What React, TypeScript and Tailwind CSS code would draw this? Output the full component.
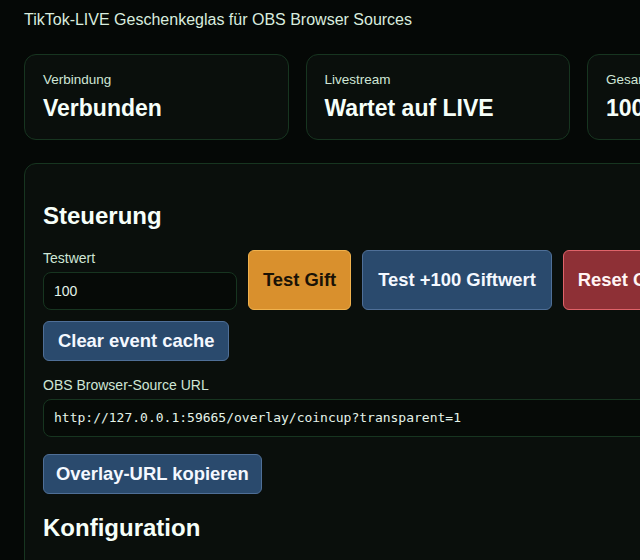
import React from "react";

const stats = [
  { label: "Verbindung", value: "Verbunden" },
  { label: "Livestream", value: "Wartet auf LIVE" },
  { label: "Gesamtwert", value: "100" },
  { label: "Letztes Geschenk", value: "–" },
];

const overlayUrl = "http://127.0.0.1:59665/overlay/coincup?transparent=1";

function StatCard({ label, value }: { label: string; value: string }) {
  return (
    <div className="h-[86px] rounded-[12px] border border-[#173520] bg-[#0a0f0c] px-[18px] pt-[17px]">
      <div className="text-[13.5px] leading-[16px] text-[#cfe6d6]">{label}</div>
      <div className="mt-[7px] text-[23px] font-bold leading-[26px] text-[#f6fff9]">{value}</div>
    </div>
  );
}

export default function App() {
  return (
    <div
      className="h-screen w-screen overflow-hidden bg-[#050806] text-[#d9ecdf]"
      style={{ fontFamily: '"Liberation Sans", Arial, sans-serif' }}
    >
      <div className="w-[1160px] px-6">
        {/* Header */}
        <p className="pt-[11px] text-[16px] leading-[18px] text-[#d9ecdf]">
          TikTok-LIVE Geschenkeglas für OBS Browser Sources
        </p>

        {/* Status cards */}
        <div className="mt-[25px] grid grid-cols-[repeat(4,264.5px)] gap-[17px]">
          {stats.map((s) => (
            <StatCard key={s.label} label={s.label} value={s.value} />
          ))}
        </div>

        {/* Control panel */}
        <div className="mt-[23px] rounded-[12px] border border-[#173520] bg-[#0a0f0c] px-[18px] pb-8">
          <h2 className="pt-[38px] text-[24px] font-bold leading-[28px] text-[#f6fff9]">Steuerung</h2>

          <div className="mt-[20px] flex flex-col gap-[11px]">
            <div className="flex items-stretch gap-[11px]">
              <div className="flex w-[194px] flex-col">
                <label className="text-[14px] leading-[16px] text-[#cfe6d6]">Testwert</label>
                <input
                  defaultValue="100"
                  className="mt-[6px] h-[38px] w-full rounded-[8px] border border-[#173520] bg-[#060a07] px-[10px] text-[14px] text-[#e4f3e9] outline-none"
                />
              </div>
              <button className="h-[60px] rounded-[6px] border border-[#f0b24e] bg-[#d9902d] px-[14px] text-[18.4px] font-bold text-[#1a1206]">
                Test Gift
              </button>
              <button className="h-[60px] rounded-[6px] border border-[#4f6f97] bg-[#2a4a6d] px-[15px] text-[18.4px] font-bold text-[#f4f8ff]">
                Test +100 Giftwert
              </button>
              <button className="h-[60px] rounded-[6px] border border-[#e0636a] bg-[#8e3036] px-[14px] text-[18.4px] font-bold text-[#fff4f4]">
                Reset Glas
              </button>
            </div>
            <div>
              <button className="h-[40px] rounded-[6px] border border-[#4f6f97] bg-[#2a4a6d] px-[14px] text-[18.4px] font-bold text-[#f4f8ff]">
                Clear event cache
              </button>
            </div>
          </div>

          <label className="mt-[16px] block text-[14px] leading-[16px] text-[#cfe6d6]">
            OBS Browser-Source URL
          </label>
          <div
            className="mt-[6px] flex h-[38px] items-center rounded-[8px] border border-[#173520] bg-[#060a07] px-[10px] text-[13px] text-[#e4f3e9]"
            style={{ fontFamily: '"DejaVu Sans Mono", monospace' }}
          >
            {overlayUrl}
          </div>

          <button className="mt-[17px] h-[40px] rounded-[6px] border border-[#4f6f97] bg-[#2a4a6d] px-[12px] text-[18.4px] font-bold text-[#f4f8ff]">
            Overlay-URL kopieren
          </button>

          <h2 className="mt-[20px] text-[24px] font-bold leading-[28px] text-[#f6fff9]">Konfiguration</h2>
        </div>
      </div>
    </div>
  );
}
